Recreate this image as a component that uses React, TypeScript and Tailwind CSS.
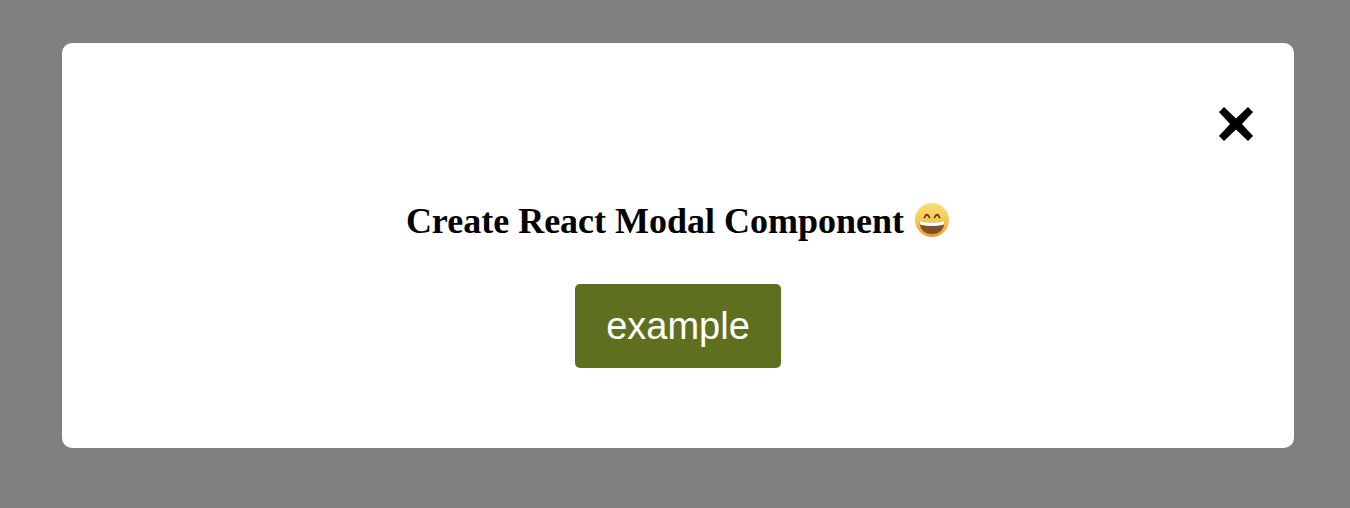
export default function App() {
  return (
    <div className="h-[508px] w-[1350px] overflow-hidden bg-[#808080] pl-[62px] pt-[43px]">
      <div className="flex h-[405px] w-[1232px] flex-col rounded-[10px] bg-white">
        <div className="flex justify-end pr-[40px] pt-[64px]">
          <button aria-label="close" className="block h-[34px] w-[35px]">
            <svg viewBox="0 0 35 34" className="h-[34px] w-[35px]">
              <path d="M5 0 L17 11.5 L29 0 L34 5 L23 17 L34 29 L29 34 L17 22.5 L5 34 L0 29 L11 17 L0 5 Z" fill="#000" />
            </svg>
          </button>
        </div>
        <h1 className="mt-[59px] flex h-[40px] items-center justify-center font-['Liberation_Serif',serif] text-[36px] font-bold leading-[40px] text-black">
          <span className="pt-[2px]">Create React Modal Component</span>
          <svg viewBox="0 0 36 36" className="ml-[10px] h-[36px] w-[36px]">
            <defs>
              <linearGradient id="f" x1="0" y1="0" x2="0" y2="1">
                <stop offset="0%" stopColor="#fbdc78" />
                <stop offset="55%" stopColor="#f8c850" />
                <stop offset="100%" stopColor="#ec9a30" />
              </linearGradient>
            </defs>
            <circle cx="18" cy="18" r="17" fill="url(#f)" />
            <path d="M5.5 19 Q18 22 30.5 19 Q30 32 18 32 Q6 32 5.5 19 Z" fill="#7d5226" />
            <path d="M5.5 19 Q18 22 30.5 19 L30 22.5 Q18 25.5 6 22.5 Z" fill="#fff" />
            <path d="M10.5 15.5 Q13 10 15.5 15.5" fill="none" stroke="#5f3d1a" strokeWidth="1.8" strokeLinecap="round" />
            <path d="M20.5 15.5 Q23 10 25.5 15.5" fill="none" stroke="#5f3d1a" strokeWidth="1.8" strokeLinecap="round" />
          </svg>
        </h1>
        <div className="mt-[44px] flex justify-center">
          <button className="h-[84px] w-[206px] rounded-[5px] bg-[#5f6f20] font-['Liberation_Sans',sans-serif] text-[38px] text-white">
            example
          </button>
        </div>
      </div>
    </div>
  );
}
